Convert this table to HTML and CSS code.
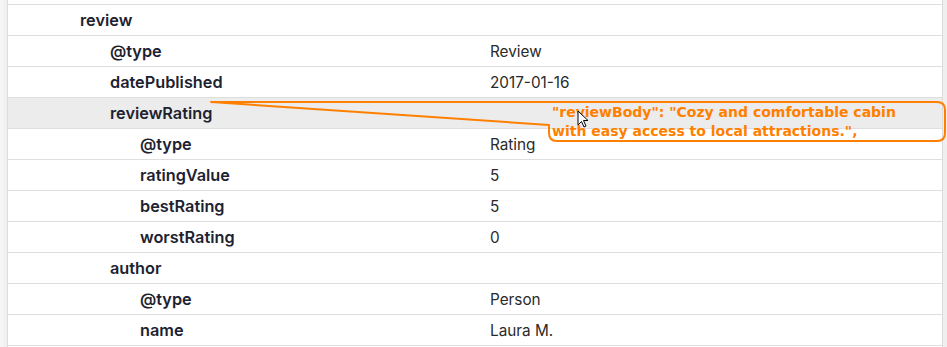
FILE: index.html
```html
<!DOCTYPE html>
<html>
<head>
<meta charset="utf-8">
<link rel="stylesheet" href="styles.css">
</head>
<body>
<div class="frame">
  <div class="side-left"></div>
  <div class="table">
    <div class="prev"></div>
    <div class="row"><div class="key l1">review</div><div class="val"></div></div>
    <div class="row"><div class="key l2">@type</div><div class="val">Review</div></div>
    <div class="row"><div class="key l2">datePublished</div><div class="val">2017-01-16</div></div>
    <div class="row hl"><div class="key l2">reviewRating</div><div class="val"></div></div>
    <div class="row"><div class="key l3">@type</div><div class="val">Rating</div></div>
    <div class="row"><div class="key l3">ratingValue</div><div class="val">5</div></div>
    <div class="row"><div class="key l3">bestRating</div><div class="val">5</div></div>
    <div class="row"><div class="key l3">worstRating</div><div class="val">0</div></div>
    <div class="row"><div class="key l2">author</div><div class="val"></div></div>
    <div class="row"><div class="key l3">@type</div><div class="val">Person</div></div>
    <div class="row last"><div class="key l3">name</div><div class="val">Laura M.</div></div>
  </div>
  <div class="side-right"></div>
</div>
<svg class="callout-shape" width="947" height="347" viewBox="0 0 947 347">
  <path d="M211,102 L937,102 Q945,102 945,110 L945,133 Q945,141 937,141 L557,141 Q549,141 549,133 L549,125 Z" fill="none" stroke="#ff8000" stroke-width="2" stroke-linejoin="round"/>
</svg>
<div class="callout-text">"reviewBody": "Cozy and comfortable cabin<br>with easy access to local attractions.",</div>
<svg class="cursor" width="14" height="20" viewBox="0 0 14 20">
  <path d="M1,1 L1,15 L4.5,11.5 L7,17 L9,16 L6.5,10.5 L11,10.5 Z" fill="#fff" stroke="#000" stroke-width="1" stroke-linejoin="round"/>
</svg>
</body>
</html>
```
FILE: styles.css
```css
html, body {
  margin: 0;
  padding: 0;
  background: #fff;
  width: 947px;
  height: 347px;
  overflow: hidden;
}
body {
  position: relative;
  font-family: Inter, "Noto Sans", sans-serif;
}
.frame {
  display: flex;
  height: 347px;
}
.side-left {
  width: 7px;
  background: linear-gradient(to right, #f7f7f7, #efefef);
  border-right: 1px solid #dcdcdc;
}
.side-right {
  width: 4px;
  background: #efefef;
  border-left: 1px solid #dcdcdc;
}
.table {
  flex: 1;
  display: flex;
  flex-direction: column;
}
.prev {
  height: 4px;
}
.row {
  display: grid;
  grid-template-columns: 482px 1fr;
  height: 30px;
  border-top: 1px solid #dedede;
  align-items: center;
}
.row.last {
  border-bottom: 1px solid #dedede;
}
.row.hl {
  background: #ececec;
}
.key {
  font-size: 16.3px;
  font-weight: 600;
  color: #1d2230;
}
.l1 { padding-left: 72px; }
.l2 { padding-left: 102px; }
.l3 { padding-left: 132px; }
.val {
  font-size: 15.3px;
  color: #2a2a2a;
}
.callout-shape {
  position: absolute;
  left: 0;
  top: 0;
}
.callout-text {
  position: absolute;
  left: 552px;
  top: 103px;
  font-family: "DejaVu Sans", sans-serif;
  font-size: 14px;
  font-weight: 700;
  line-height: 19px;
  color: #ff7f00;
  white-space: nowrap;
}
.cursor {
  position: absolute;
  left: 577px;
  top: 110px;
}
```
